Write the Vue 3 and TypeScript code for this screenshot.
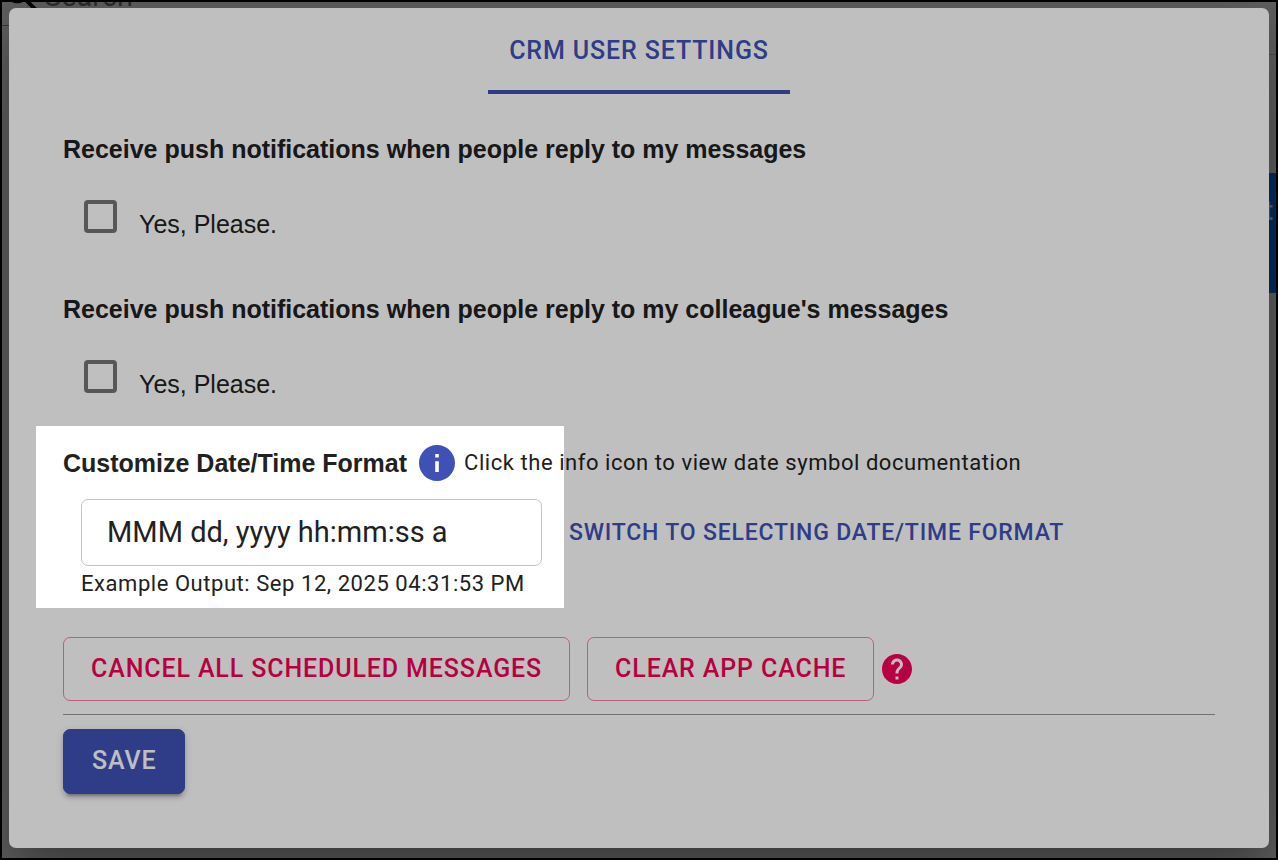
<script setup lang="ts">
import { ref } from 'vue'

interface Preference {
  id: string
  title: string
  enabled: boolean
}

const preferences = ref<Preference[]>([
  { id: 'own-replies', title: 'Receive push notifications when people reply to my messages', enabled: false },
  { id: 'colleague-replies', title: "Receive push notifications when people reply to my colleague's messages", enabled: false },
])

const dateFormat = ref('MMM dd, yyyy hh:mm:ss a')
const exampleOutput = 'Sep 12, 2025 04:31:53 PM'
</script>

<template>
  <div class="screen">
    <div class="page" aria-hidden="true">
      <div class="search">
        <svg class="search-icon" viewBox="0 0 24 24">
          <path d="M15.5 14h-.79l-.28-.27C15.41 12.59 16 11.11 16 9.5 16 5.91 13.09 3 9.5 3S3 5.91 3 9.5 5.91 16 9.5 16c1.61 0 3.09-.59 4.23-1.57l.27.28v.79l5 4.99L20.49 19l-4.99-5zm-6 0C7.01 14 5 11.99 5 9.5S7.01 5 9.5 5 14 7.01 14 9.5 11.99 14 9.5 14z" />
        </svg>
        <span>Search</span>
      </div>
      <div class="rule rule-left"></div>
      <div class="rule rule-right"></div>
      <div class="page-action">t</div>
    </div>
    <div class="backdrop"></div>

    <main class="dialog" role="dialog" aria-label="CRM User Settings">
      <div class="tabs" role="tablist">
        <button class="tab" type="button" role="tab" aria-selected="true">CRM USER SETTINGS</button>
      </div>

      <form class="content" @submit.prevent>
        <section v-for="pref in preferences" :key="pref.id" class="preference">
          <h2>{{ pref.title }}</h2>
          <label class="choice">
            <input v-model="pref.enabled" type="checkbox" />
            <span>Yes, Please.</span>
          </label>
        </section>

        <section class="format">
          <div class="format-head">
            <h2><label for="date-format">Customize Date/Time Format</label></h2>
            <button class="icon-button info" type="button" aria-label="Date symbol documentation">
              <svg class="info-icon" viewBox="2 2 20 20">
                <path d="M12 2C6.48 2 2 6.48 2 12s4.48 10 10 10 10-4.48 10-10S17.52 2 12 2zm1 15h-2v-6h2v6zm0-8h-2V7h2v2z" />
              </svg>
            </button>
            <span class="caption">Click the info icon to view date symbol documentation</span>
          </div>
          <div class="format-row">
            <input id="date-format" v-model="dateFormat" class="format-input" type="text" />
            <button class="text-button" type="button">SWITCH TO SELECTING DATE/TIME FORMAT</button>
          </div>
          <p class="caption example">Example Output: {{ exampleOutput }}</p>
          <div class="spotlight"></div>
        </section>

        <div class="actions">
          <button class="button outlined" type="button">CANCEL ALL SCHEDULED MESSAGES</button>
          <button class="button outlined" type="button">CLEAR APP CACHE</button>
          <button class="icon-button help" type="button" aria-label="Help">
            <svg class="help-icon" viewBox="2 2 20 20">
              <path d="M12 2C6.48 2 2 6.48 2 12s4.48 10 10 10 10-4.48 10-10S17.52 2 12 2zm1 17h-2v-2h2v2zm2.07-7.75l-.9.92C13.45 12.9 13 13.5 13 15h-2v-.5c0-1.1.45-2.1 1.17-2.83l1.24-1.26c.37-.36.59-.86.59-1.41 0-1.1-.9-2-2-2s-2 .9-2 2H8c0-2.21 1.79-4 4-4s4 1.79 4 4c0 .88-.36 1.68-.93 2.25z" />
            </svg>
          </button>
        </div>
        <hr />
        <button class="button contained" type="submit">SAVE</button>
      </form>
    </main>
  </div>
</template>

<style>
body {
  margin: 0;
}
</style>

<style scoped>
* {
  box-sizing: border-box;
}

.screen {
  position: relative;
  display: flex;
  min-height: 100vh;
  padding: 6px 7px 10px;
  border: 2px solid #000;
  overflow: hidden;
  background: #fff;
  color: #212121;
  font-family: Roboto, "Liberation Sans", sans-serif;
}

.page,
.backdrop {
  position: absolute;
  inset: 0;
}

.backdrop {
  background: rgba(0, 0, 0, 0.5);
}

.search {
  position: absolute;
  top: -28px;
  left: -2px;
  display: flex;
  align-items: center;
  height: 44px;
  font-size: 29px;
  line-height: 44px;
  color: #757575;
}

.search-icon {
  width: 44px;
  height: 44px;
  fill: #000;
}

.rule {
  position: absolute;
  height: 1px;
  background: #999;
}

.rule-left {
  top: 23px;
  left: 0;
  width: 50%;
}

.rule-right {
  top: 52px;
  right: 0;
  width: 50%;
  background: #d0d0d0;
}

.page-action {
  position: absolute;
  top: 171px;
  right: 0;
  width: 60px;
  height: 120px;
  padding-right: 3px;
  background: #0b7cff;
  color: #fff;
  font-size: 28px;
  font-weight: 500;
  line-height: 76px;
  text-align: right;
}

.dialog {
  position: relative;
  flex: 1;
  border-radius: 7px;
  background: #fff;
  box-shadow:
    0 20px 28px -13px rgba(0, 0, 0, 0.2),
    0 44px 70px 6px rgba(0, 0, 0, 0.14),
    0 17px 85px 15px rgba(0, 0, 0, 0.12);
}

button {
  border: 0;
  background: none;
  font-family: inherit;
  font-weight: 500;
  letter-spacing: 0.035em;
  cursor: pointer;
}

.tabs {
  display: flex;
  justify-content: center;
}

.tab {
  height: 86px;
  padding: 2px 21px 0;
  border-bottom: 4px solid #3f51b5;
  color: #3f51b5;
  font-size: 25px;
}

.content {
  padding: 39px 54px;
}

h2 {
  margin: 0;
  font-family: "Liberation Sans", sans-serif;
  font-size: 25px;
  line-height: 32px;
  font-weight: 700;
}

.preference {
  display: flex;
  flex-direction: column;
  align-items: flex-start;
  gap: 35px;
  margin-bottom: 53px;
}

.preference + .format {
  margin-top: -8px;
}

.choice {
  display: flex;
  align-items: baseline;
  gap: 22px;
  height: 40px;
  margin-left: 21px;
  font-family: "Liberation Sans", sans-serif;
  font-size: 25px;
  line-height: 30px;
}

.choice input {
  appearance: none;
  width: 33px;
  height: 33px;
  margin: 0 0 1px;
  border: 4px solid #757575;
  border-radius: 4px;
}

.choice input:checked {
  border-color: #3f51b5;
  background: #3f51b5;
}

.format {
  position: relative;
}

.format-head {
  display: flex;
  align-items: center;
  height: 36px;
}

.icon-button {
  display: flex;
  padding: 0;
}

.info {
  margin: 0 9px 0 12px;
}

.help {
  margin-left: 8px;
}

.info-icon {
  width: 36px;
  height: 36px;
  fill: #3f51b5;
}

.help-icon {
  width: 30px;
  height: 30px;
  fill: #f50057;
}

.caption {
  margin: 0;
  font-size: 22px;
  line-height: 36px;
  letter-spacing: 0.025em;
}

.format-row {
  display: flex;
  align-items: center;
  margin: 18px 0 0 18px;
}

.format-input {
  width: 461px;
  height: 67px;
  padding: 0 25px 2px;
  border: 1px solid #c4c4c4;
  border-radius: 7px;
  background: #fff;
  color: #212121;
  font-family: inherit;
  font-size: 29px;
}

.text-button {
  padding: 0;
  margin-left: 27px;
  color: #3f51b5;
  font-size: 23px;
}

.example {
  margin-left: 18px;
}

/* Dims everything outside the date format field. */
.spotlight {
  position: absolute;
  z-index: 1;
  top: -19px;
  left: -27px;
  width: 528px;
  height: 182px;
  box-shadow: 0 0 0 4000px rgba(0, 0, 0, 0.25);
  pointer-events: none;
}

.actions {
  display: flex;
  align-items: center;
  margin-top: 35px;
}

.button {
  height: 64px;
  padding: 0 27px 2px;
  border: 1px solid transparent;
  border-radius: 7px;
  font-size: 25px;
}

.outlined {
  border-color: rgba(245, 0, 87, 0.5);
  color: #f50057;
}

.outlined + .outlined {
  margin-left: 17px;
}

hr {
  height: 1px;
  margin: 13px 0 14px;
  border: 0;
  background: #999;
}

.contained {
  height: 65px;
  padding: 0 28px 2px;
  border-color: #3f51b5;
  background: #3f51b5;
  color: #fff;
  box-shadow:
    0 6px 2px -4px rgba(0, 0, 0, 0.2),
    0 4px 4px 0 rgba(0, 0, 0, 0.14),
    0 2px 9px 0 rgba(0, 0, 0, 0.12);
}
</style>
